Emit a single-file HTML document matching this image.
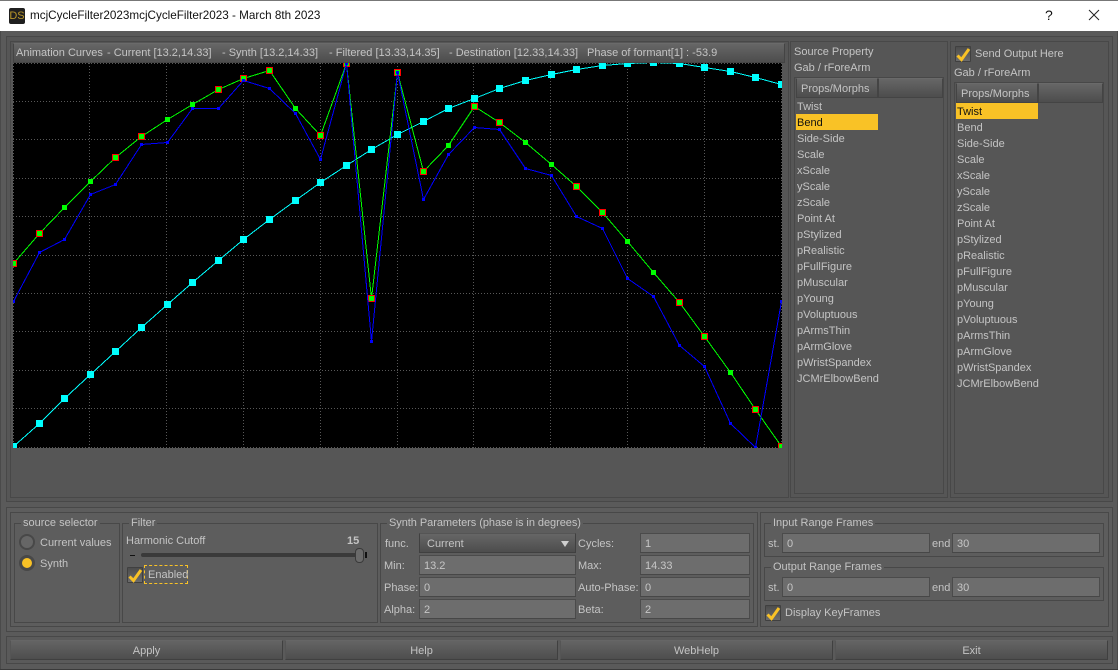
<!DOCTYPE html>
<html><head><meta charset="utf-8"><title>mcjCycleFilter2023</title>
<style>
html,body{margin:0;padding:0;background:#5a5a5a}
#w{position:relative;width:1118px;height:670px;overflow:hidden;background:#5a5a5a;font:11px/14px "Liberation Sans",Arial,sans-serif;color:#c4c4c4}
#w div{position:absolute;box-sizing:border-box}
.f{border:1px solid #484848}
.t{white-space:nowrap;height:14px;margin-top:1px}
.fld{background:#6d6d6d;border:1px solid #4b4b4b;padding:3px 0 0 4px;height:20px;color:#c6c6c6;border-bottom-color:#474747}
.btn{background:linear-gradient(#646464,#4e4e4e);border:1px solid #404040;border-top-color:#666;border-left-color:#555;text-align:center;padding-top:3px}
.hd{background:linear-gradient(#666,#4d4d4d);border:1px solid #444;border-top-color:#6a6a6a}
.cb{width:16px;height:16px;border:1px solid #404040;background:linear-gradient(#4c4c4c,#6c6c6c);border-radius:1px}
.cb svg{position:absolute;left:0;top:0}
.sel{background:#f9c226;color:#111;height:16px}
</style></head><body><div id="w">
<!-- title bar -->
<div style="left:0;top:0;width:1118px;height:31px;background:#fff;border-top:1px solid #777"></div>
<div style="left:9px;top:8px;width:16px;height:16px;background:#1f1f1f;border-radius:2px;color:#b8962a;font:11px/16px 'Liberation Sans',sans-serif;text-align:center">DS</div>
<div class="t" style="left:30px;top:8px;font-size:11.7px;line-height:16px;color:#111;height:16px;margin-top:0">mcjCycleFilter2023mcjCycleFilter2023 - March 8th 2023</div>
<div class="t" style="left:1045px;top:7px;font-size:14px;line-height:16px;color:#111;height:16px;margin-top:0">?</div>
<svg style="position:absolute;left:1088px;top:9px" width="12" height="12"><path d="M1 1L11 11M11 1L1 11" stroke="#222" stroke-width="1" fill="none"/></svg>
<div style="left:0;top:31px;width:1px;height:639px;background:#4a4a4a"></div>
<div style="left:1117px;top:31px;width:1px;height:639px;background:#4a4a4a"></div>
<div style="left:0;top:669px;width:1118px;height:1px;background:#3a3a3a"></div>

<!-- main panels -->
<div class="f" style="left:6px;top:36px;width:1107px;height:466px;background:#565656"></div>
<div class="f" style="left:10px;top:41px;width:779px;height:457px"></div>
<div class="f" style="left:790px;top:41px;width:158px;height:457px"></div>
<div class="f" style="left:950px;top:41px;width:159px;height:457px"></div>

<!-- curve header -->
<div class="hd" style="left:13px;top:43px;width:772px;height:20px"></div>
<div class="t" style="left:16px;top:45px">Animation Curves</div>
<div class="t" style="left:107px;top:45px">- Current [13.2,14.33]</div>
<div class="t" style="left:222px;top:45px">- Synth [13.2,14.33]</div>
<div class="t" style="left:329px;top:45px">- Filtered [13.33,14.35]</div>
<div class="t" style="left:449px;top:45px">- Destination [12.33,14.33]</div>
<div class="t" style="left:587px;top:45px">Phase of formant[1] : -53.9</div>

<!-- plot -->
<svg style="position:absolute;left:0;top:0" width="1118" height="670" shape-rendering="crispEdges">
<defs>
<clipPath id="pc"><rect x="13" y="63" width="769" height="385"/></clipPath>
<marker id="mc" markerUnits="userSpaceOnUse" markerWidth="7" markerHeight="7" refX="3.5" refY="3.5"><rect width="7" height="7" fill="#0ff"/></marker>
<marker id="mg" markerUnits="userSpaceOnUse" markerWidth="5" markerHeight="5" refX="2.5" refY="2.5"><rect width="5" height="5" fill="#0f0"/></marker>
<marker id="mb" markerUnits="userSpaceOnUse" markerWidth="3" markerHeight="3" refX="1.5" refY="1.5"><rect width="3" height="3" fill="#00f"/></marker>
</defs>
<rect x="13" y="63" width="769" height="385" fill="#000"/>
<g stroke="#585858" stroke-width="1" stroke-dasharray="1 2" fill="none">
<path d="M13.5 63V448M89.5 63V448M166.5 63V448M243.5 63V448M320.5 63V448M397.5 63V448M473.5 63V448M550.5 63V448M627.5 63V448M704.5 63V448M781.5 63V448"/>
<path d="M13 63.5H782M13 101.5H782M13 139.5H782M13 178.5H782M13 216.5H782M13 255.5H782M13 293.5H782M13 331.5H782M13 370.5H782M13 408.5H782M13 447.5H782"/>
</g>
<g clip-path="url(#pc)"><g transform="translate(.5 .5)" fill="none" stroke-width="1">
<polyline stroke="#0ff" marker-start="url(#mc)" marker-mid="url(#mc)" marker-end="url(#mc)" points="13,446 39,423 64,398 90,374 115,351 141,327 167,304 192,282 218,260 243,239 269,219 295,200 320,182 346,165 371,149 397,134 423,121 448,108 474,98 499,88 525,80 551,74 576,69 602,65 627,63 653,62 679,63 704,67 730,71 755,77 781,84"/>
<polyline stroke="#0f0" marker-start="url(#mg)" marker-mid="url(#mg)" marker-end="url(#mg)" points="13,263 39,233 64,207 90,181 115,157 141,136 167,119 192,104 218,89 243,78 269,70 295,108 320,135 346,63 371,298 397,72 423,171 448,145 474,106 499,122 525,142 551,164 576,186 602,212 627,241 653,272 679,302 704,336 730,372 755,409 781,446"/>
<g stroke="#f00">
<rect x="10" y="260" width="6" height="6"/><rect x="36" y="230" width="6" height="6"/><rect x="112" y="154" width="6" height="6"/><rect x="138" y="133" width="6" height="6"/><rect x="215" y="86" width="6" height="6"/><rect x="240" y="75" width="6" height="6"/><rect x="266" y="67" width="6" height="6"/><rect x="317" y="132" width="6" height="6"/><rect x="343" y="60" width="6" height="6"/><rect x="368" y="295" width="6" height="6"/><rect x="394" y="69" width="6" height="6"/><rect x="420" y="168" width="6" height="6"/><rect x="471" y="103" width="6" height="6"/><rect x="496" y="119" width="6" height="6"/><rect x="573" y="183" width="6" height="6"/><rect x="599" y="209" width="6" height="6"/><rect x="676" y="299" width="6" height="6"/><rect x="701" y="333" width="6" height="6"/><rect x="752" y="406" width="6" height="6"/><rect x="778" y="443" width="6" height="6"/>
</g>
<polyline stroke="#00f" marker-start="url(#mb)" marker-mid="url(#mb)" marker-end="url(#mb)" points="13,301 39,252 64,239 90,194 115,184 141,144 167,142 192,108 218,108 243,80 269,88 295,113 320,159 346,63 371,341 397,72 423,199 448,154 474,127 499,129 525,168 551,175 576,216 602,228 627,278 653,296 679,345 704,366 730,423 755,447 781,301"/>
</g></g>
</svg>

<!-- source property -->
<div class="t" style="left:794px;top:44px">Source Property</div>
<div class="t" style="left:794px;top:60px">Gab / rForeArm</div>
<div class="f" style="left:794px;top:77px;width:150px;height:417px"></div>
<div class="hd" style="left:796px;top:78px;width:82px;height:20px;padding:3px 0 0 4px">Props/Morphs</div>
<div class="hd" style="left:878px;top:78px;width:65px;height:20px"></div>
<div class="sel" style="left:796px;top:114px;width:82px"></div>
<div class="t" style="left:797px;top:99px">Twist</div>
<div class="t" style="left:797px;top:115px;color:#111">Bend</div>
<div class="t" style="left:797px;top:131px">Side-Side</div>
<div class="t" style="left:797px;top:147px">Scale</div>
<div class="t" style="left:797px;top:163px">xScale</div>
<div class="t" style="left:797px;top:179px">yScale</div>
<div class="t" style="left:797px;top:195px">zScale</div>
<div class="t" style="left:797px;top:211px">Point At</div>
<div class="t" style="left:797px;top:227px">pStylized</div>
<div class="t" style="left:797px;top:243px">pRealistic</div>
<div class="t" style="left:797px;top:259px">pFullFigure</div>
<div class="t" style="left:797px;top:275px">pMuscular</div>
<div class="t" style="left:797px;top:291px">pYoung</div>
<div class="t" style="left:797px;top:307px">pVoluptuous</div>
<div class="t" style="left:797px;top:323px">pArmsThin</div>
<div class="t" style="left:797px;top:339px">pArmGlove</div>
<div class="t" style="left:797px;top:355px">pWristSpandex</div>
<div class="t" style="left:797px;top:371px">JCMrElbowBend</div>

<!-- output -->
<div class="cb" style="left:955px;top:46px"><svg width="16" height="16"><path d="M1.5 8.5L5.5 12.5L13 2" stroke="#f9c226" stroke-width="3" fill="none"/></svg></div>
<div class="t" style="left:975px;top:46px">Send Output Here</div>
<div class="t" style="left:954px;top:65px">Gab / rForeArm</div>
<div class="f" style="left:954px;top:82px;width:150px;height:412px"></div>
<div class="hd" style="left:956px;top:83px;width:82px;height:20px;padding:3px 0 0 4px">Props/Morphs</div>
<div class="hd" style="left:1038px;top:83px;width:65px;height:20px"></div>
<div class="sel" style="left:956px;top:103px;width:82px"></div>
<div class="t" style="left:957px;top:104px;color:#111">Twist</div>
<div class="t" style="left:957px;top:120px">Bend</div>
<div class="t" style="left:957px;top:136px">Side-Side</div>
<div class="t" style="left:957px;top:152px">Scale</div>
<div class="t" style="left:957px;top:168px">xScale</div>
<div class="t" style="left:957px;top:184px">yScale</div>
<div class="t" style="left:957px;top:200px">zScale</div>
<div class="t" style="left:957px;top:216px">Point At</div>
<div class="t" style="left:957px;top:232px">pStylized</div>
<div class="t" style="left:957px;top:248px">pRealistic</div>
<div class="t" style="left:957px;top:264px">pFullFigure</div>
<div class="t" style="left:957px;top:280px">pMuscular</div>
<div class="t" style="left:957px;top:296px">pYoung</div>
<div class="t" style="left:957px;top:312px">pVoluptuous</div>
<div class="t" style="left:957px;top:328px">pArmsThin</div>
<div class="t" style="left:957px;top:344px">pArmGlove</div>
<div class="t" style="left:957px;top:360px">pWristSpandex</div>
<div class="t" style="left:957px;top:376px">JCMrElbowBend</div>

<!-- bottom section -->
<div class="f" style="left:6px;top:507px;width:1107px;height:125px;background:#5d5d5d"></div>
<div class="f" style="left:10px;top:512px;width:748px;height:115px"></div>
<div class="f" style="left:760px;top:512px;width:349px;height:115px"></div>

<!-- source selector -->
<div class="f" style="left:14px;top:523px;width:106px;height:100px"></div>
<div class="t" style="left:21px;top:515px;background:#5d5d5d;padding:0 2px">source selector</div>
<div style="left:19px;top:534px;width:16px;height:16px;border-radius:50%;background:#666;border:2px solid #484848"></div>
<div class="t" style="left:40px;top:535px">Current values</div>
<div style="left:19px;top:555px;width:16px;height:16px;border-radius:50%;background:#f9c226;border:3px solid #484848"></div>
<div class="t" style="left:40px;top:556px">Synth</div>

<!-- filter -->
<div class="f" style="left:122px;top:523px;width:256px;height:100px"></div>
<div class="t" style="left:129px;top:515px;background:#5d5d5d;padding:0 2px">Filter</div>
<div class="t" style="left:126px;top:533px">Harmonic Cutoff</div>
<div class="t" style="left:347px;top:533px;font-weight:bold">15</div>
<div style="left:130px;top:555px;width:5px;height:1px;background:#111"></div>
<div style="left:141px;top:553px;width:218px;height:4px;background:#3a3a3a;border-radius:2px"></div>
<div style="left:355px;top:548px;width:9px;height:15px;background:#6a6a6a;border:1px solid #3a3a3a;border-radius:4px"></div>
<div style="left:365px;top:552px;width:2px;height:6px;background:#111"></div>
<div class="cb" style="left:127px;top:567px"><svg width="16" height="16"><path d="M1.5 8.5L5.5 12.5L13 2" stroke="#f9c226" stroke-width="3" fill="none"/></svg></div>
<div style="left:144px;top:565px;width:44px;height:19px;border:1px dashed #f9c226;padding:2px 0 0 3px">Enabled</div>

<!-- synth params -->
<div class="f" style="left:380px;top:523px;width:374px;height:100px"></div>
<div class="t" style="left:387px;top:515px;background:#5d5d5d;padding:0 2px;letter-spacing:-.05px">Synth Parameters (phase is in degrees)</div>
<div class="t" style="left:385px;top:536px">func.</div>
<div class="hd" style="left:419px;top:533px;width:157px;height:20px;padding:3px 0 0 7px;border:1px solid #404040;border-top-color:#555">Current</div>
<svg style="position:absolute;left:561px;top:540px" width="9" height="8"><path d="M0 1H8L4 7Z" fill="#cfcfcf"/></svg>
<div class="t" style="left:578px;top:536px">Cycles:</div>
<div class="fld" style="left:640px;top:533px;width:110px">1</div>
<div class="t" style="left:384px;top:558px">Min:</div>
<div class="fld" style="left:419px;top:555px;width:157px">13.2</div>
<div class="t" style="left:578px;top:558px">Max:</div>
<div class="fld" style="left:640px;top:555px;width:110px">14.33</div>
<div class="t" style="left:384px;top:580px">Phase:</div>
<div class="fld" style="left:419px;top:577px;width:157px">0</div>
<div class="t" style="left:578px;top:580px">Auto-Phase:</div>
<div class="fld" style="left:640px;top:577px;width:110px">0</div>
<div class="t" style="left:384px;top:602px">Alpha:</div>
<div class="fld" style="left:419px;top:599px;width:157px">2</div>
<div class="t" style="left:578px;top:602px">Beta:</div>
<div class="fld" style="left:640px;top:599px;width:110px">2</div>

<!-- ranges -->
<div class="f" style="left:764px;top:523px;width:340px;height:34px"></div>
<div class="t" style="left:771px;top:515px;background:#5d5d5d;padding:0 2px">Input Range Frames</div>
<div class="t" style="left:768px;top:536px">st.</div>
<div class="fld" style="left:782px;top:533px;width:148px">0</div>
<div class="t" style="left:932px;top:536px">end</div>
<div class="fld" style="left:952px;top:533px;width:148px">30</div>
<div class="f" style="left:764px;top:567px;width:340px;height:34px"></div>
<div class="t" style="left:771px;top:559px;background:#5d5d5d;padding:0 2px">Output Range Frames</div>
<div class="t" style="left:768px;top:580px">st.</div>
<div class="fld" style="left:782px;top:577px;width:148px">0</div>
<div class="t" style="left:932px;top:580px">end</div>
<div class="fld" style="left:952px;top:577px;width:148px">30</div>
<div class="cb" style="left:765px;top:605px"><svg width="16" height="16"><path d="M1.5 8.5L5.5 12.5L13 2" stroke="#f9c226" stroke-width="3" fill="none"/></svg></div>
<div class="t" style="left:785px;top:605px">Display KeyFrames</div>

<!-- buttons -->
<div class="f" style="left:6px;top:636px;width:1107px;height:28px"></div>
<div class="btn" style="left:10px;top:640px;width:273px;height:20px">Apply</div>
<div class="btn" style="left:285px;top:640px;width:273px;height:20px">Help</div>
<div class="btn" style="left:560px;top:640px;width:273px;height:20px">WebHelp</div>
<div class="btn" style="left:835px;top:640px;width:273px;height:20px">Exit</div>
</div></body></html>
